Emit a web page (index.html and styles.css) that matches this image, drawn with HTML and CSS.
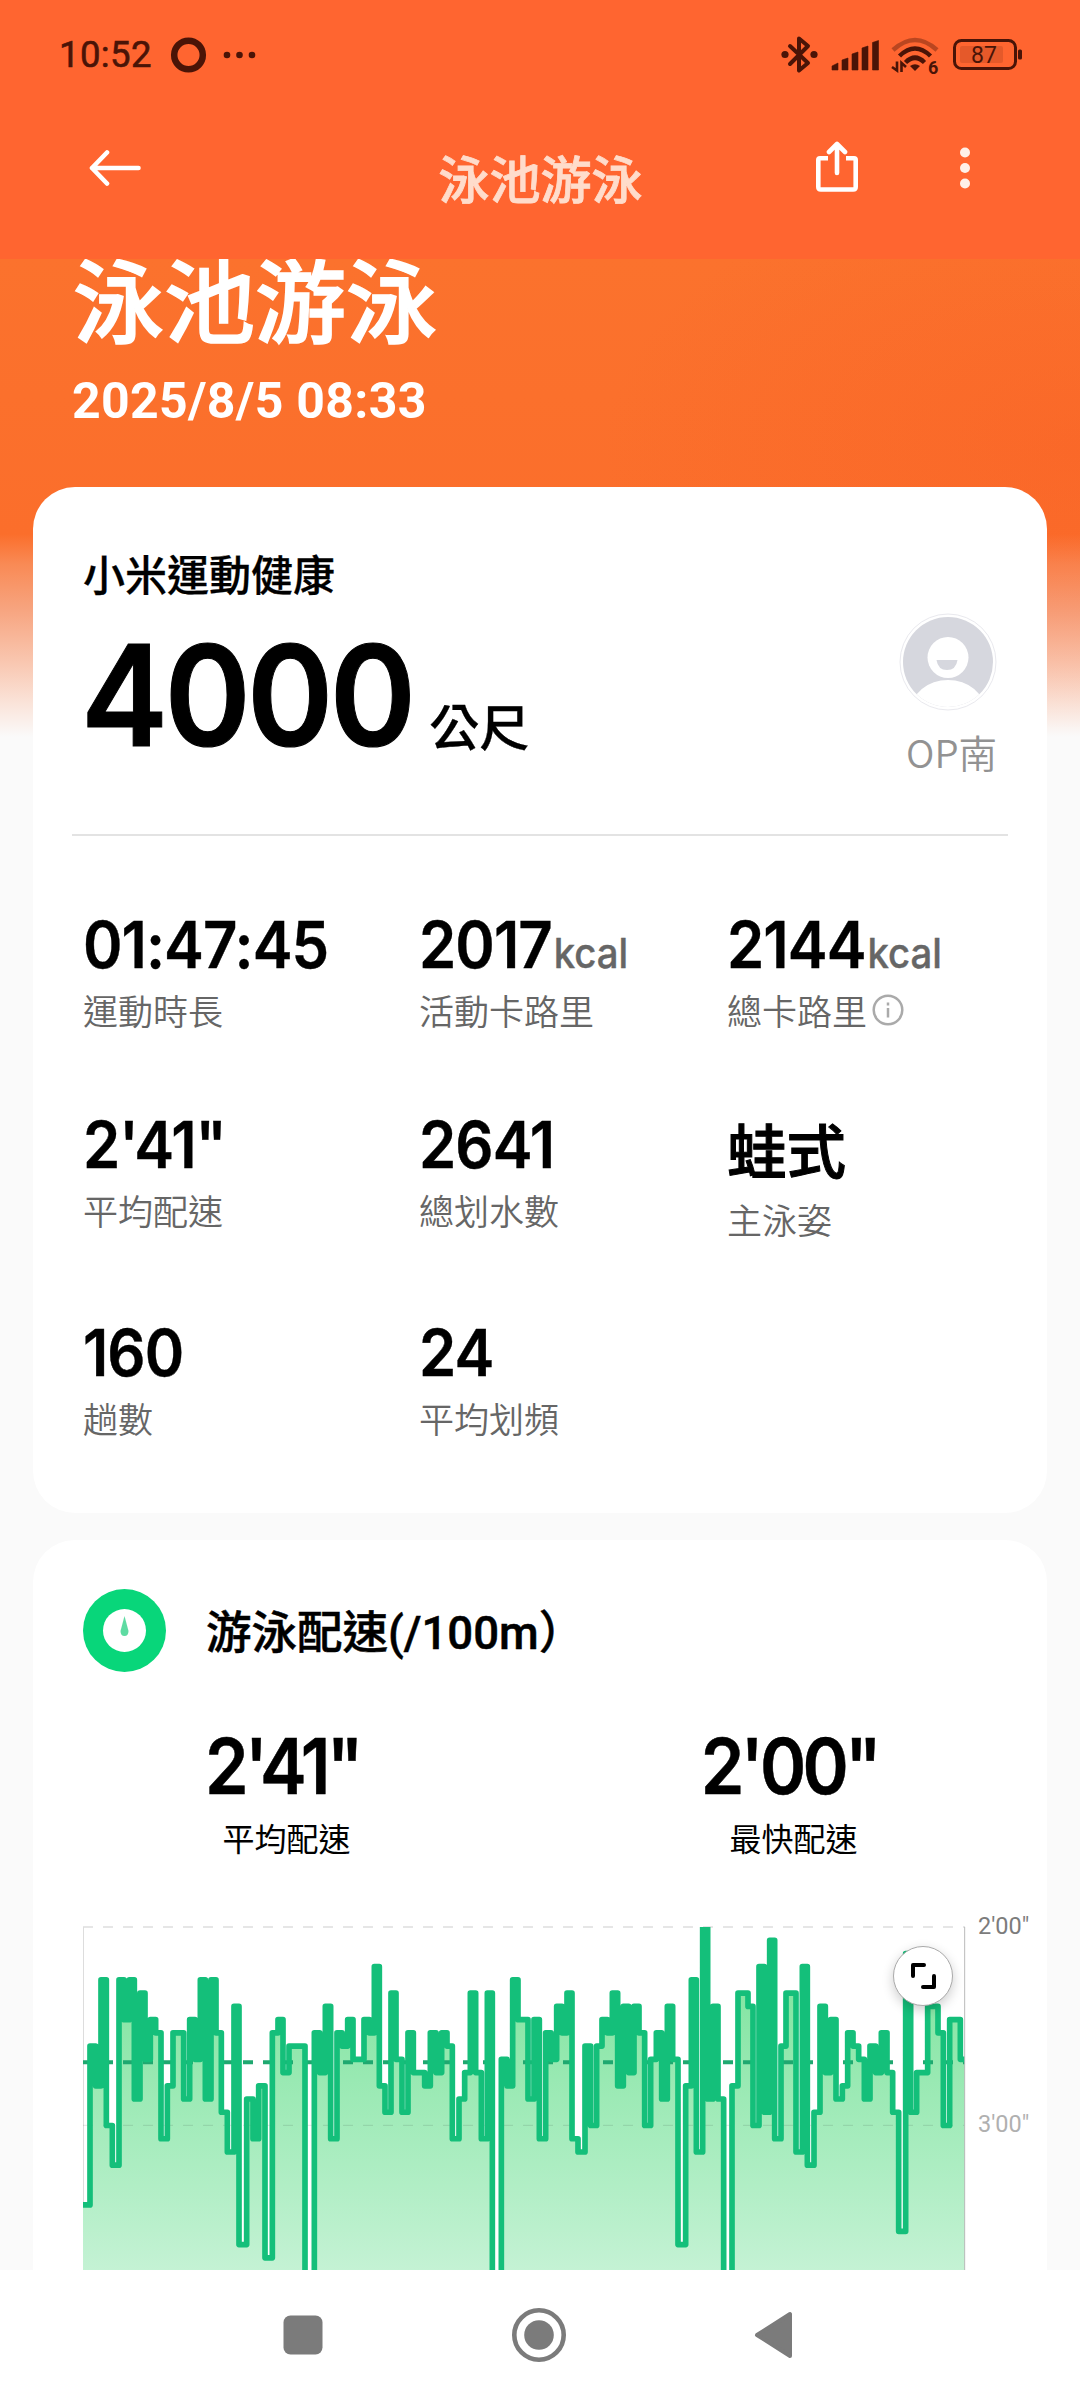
FILE: index.html
```html
<!DOCTYPE html>
<html lang="zh-Hant">
<head>
<meta charset="UTF-8">
<meta name="viewport" content="width=device-width, initial-scale=1.0">
<title>泳池游泳</title>
<link rel="stylesheet" href="styles.css">
</head>
<body>

  <header class="top">
    <div class="status">
      <span class="clock">10:52</span>
      <svg class="status-left" width="90" height="40" viewBox="0 0 90 40">
        <circle cx="21.5" cy="20" r="14.3" fill="none" stroke="#4a1407" stroke-width="6.5"/>
        <g fill="#4a1407"><circle cx="60" cy="20" r="3.3"/><circle cx="72.5" cy="20" r="3.3"/><circle cx="85" cy="20" r="3.3"/></g>
      </svg>
      <!-- bluetooth, signal, wifi, battery -->
      <svg class="status-right" width="244" height="48" viewBox="0 -2 244 48" fill="#4a1407">
        <path d="M10 13 L28 30 L19 37.5 V5.5 L28 13 L10 31" fill="none" stroke="#4a1407" stroke-width="4" stroke-linejoin="round" stroke-linecap="round"/>
        <circle cx="5" cy="21.5" r="3.6"/><circle cx="34" cy="21.5" r="3.6"/>
        <path d="M52 33 l6 -3 v7 h-6z M62 27 l6 -2 v12 h-6z M72 21 l6 -2 v18 h-6z M82 15 l6 -2 v24 h-6z M92.5 9.5 l6 -2 v29.5 h-6z" stroke="#4a1407" stroke-width=".6" stroke-linejoin="round"/>
        <g fill="none" stroke="#4a1407" stroke-width="4.5">
          <path d="M113 17 Q135 -3 157 17" opacity=".38"/>
          <path d="M119.5 23 Q135 8 150.5 23"/>
          <path d="M125.5 29.5 Q135 20 144.5 29.5"/>
        </g>
        <path d="M130 33 Q135 29.5 140 33 L135 38z"/>
        <path d="M112 34 l5 3.5 v-9 M121.5 39 v-9 l4.5 4" fill="none" stroke="#4a1407" stroke-width="2.6"/>
        <text x="148" y="41" class="wifi-num">6</text>
        <rect x="174.5" y="7.5" width="61" height="28" rx="7" fill="none" stroke="#4a1407" stroke-width="3"/>
        <rect x="180" y="13" width="43" height="17" rx="2" opacity=".14"/>
        <rect x="238" y="16.5" width="4" height="10" rx="1.5"/>
        <text x="191" y="30" class="battery-num">87</text>
      </svg>
    </div>
    <div class="appbar">
      <svg class="back" width="52" height="40" viewBox="0 0 52 40" fill="none" stroke="#fff" stroke-width="4.6" stroke-linecap="round" stroke-linejoin="round">
        <path d="M18 4.5 L3 20 L18 35.5 M3 20 H49.5"/>
      </svg>
      <span class="appbar-title">泳池游泳</span>
      <div class="actions">
        <svg width="44" height="54" viewBox="0 0 44 54" fill="none" stroke="#fff" stroke-width="4.6" stroke-linejoin="round">
          <path d="M13 17.3 H5 Q3.3 17.3 3.3 19 V46 Q3.3 48.5 5.8 48.5 H38.2 Q40.7 48.5 40.7 46 V19 Q40.7 17.3 39 17.3 H31"/>
          <path d="M22 32 V3 M14 11 L22 3 L30 11" stroke-linecap="round"/>
        </svg>
        <svg width="10" height="44" viewBox="0 0 10 44" fill="#fff0e8">
          <circle cx="5" cy="6.5" r="5"/><circle cx="5" cy="22" r="5"/><circle cx="5" cy="37.5" r="5"/>
        </svg>
      </div>
    </div>
  </header>

  <main>
    <h1>泳池游泳</h1>
    <p class="date">2025/8/5 08:33</p>

    <section class="card">
      <div class="summary">
        <div>
          <div class="source">小米運動健康</div>
          <div class="distance"><b>4000</b><span>公尺</span></div>
        </div>
        <div class="user">
          <svg width="98" height="98" viewBox="0 0 98 98">
            <clipPath id="face"><circle cx="49" cy="49" r="45"/></clipPath>
            <circle cx="49" cy="49" r="48" fill="#fff" stroke="#e9e9ee"/>
            <g clip-path="url(#face)">
              <rect width="98" height="98" fill="#d6d7de"/>
              <circle cx="49" cy="44.5" r="20.5" fill="#fff"/>
              <ellipse cx="49" cy="98" rx="37" ry="31" fill="#fff"/>
            </g>
            <path d="M37.5 47 H58.5 Q57 57 48 57 Q39 57 37.5 47z" fill="#d6d7de"/>
          </svg>
          <span>OP南</span>
        </div>
      </div>
      <div class="grid">
        <div><div class="value">01:47:45</div><div class="label">運動時長</div></div>
        <div><div class="value">2017<small>kcal</small></div><div class="label">活動卡路里</div></div>
        <div>
          <div class="value">2144<small>kcal</small></div>
          <div class="label">總卡路里<svg width="32" height="32" viewBox="0 0 32 32" fill="none" stroke="#aaa" stroke-width="2.5"><circle cx="16" cy="16" r="14.3"/><path d="M16 14 V23.5 M16 8.5 V11.5"/></svg></div>
        </div>
        <div><div class="value">2'41"</div><div class="label">平均配速</div></div>
        <div><div class="value">2641</div><div class="label">總划水數</div></div>
        <div><div class="value stroke">蛙式</div><div class="label">主泳姿</div></div>
        <div><div class="value">160</div><div class="label">趟數</div></div>
        <div><div class="value">24</div><div class="label">平均划頻</div></div>
      </div>
    </section>

    <section class="card pace">
      <div class="pace-head">
        <svg width="83" height="83" viewBox="0 0 83 83">
          <circle cx="41.5" cy="41.5" r="41.5" fill="#08d67a"/>
          <circle cx="41.5" cy="41.5" r="21.5" fill="#fff"/>
          <path d="M41.5 27 L45.5 42 Q45.5 47 41.5 47 Q37.5 47 37.5 42z" fill="#5edba2"/>
        </svg>
        <h2>游泳配速(/100m）</h2>
      </div>
      <div class="pace-stats">
        <div><b>2'41"</b><span>平均配速</span></div>
        <div><b>2'00"</b><span>最快配速</span></div>
      </div>
      <div class="chart">
        <div class="plot">
          <!-- 3 units = 1px -->
          <svg width="882" height="343" viewBox="0 0 2646 1029">
            <defs>
              <linearGradient id="fade" gradientUnits="userSpaceOnUse" x1="0" y1="0" x2="0" y2="1029">
                <stop offset="0" stop-color="#76e298"/>
                <stop offset="1" stop-color="#c4f2d4"/>
              </linearGradient>
              <clipPath id="plotArea"><rect width="2646" height="1029"/></clipPath>
            </defs>
            <path d="M0 0 H2646" stroke="#dedede" stroke-width="5" stroke-dasharray="30 30"/>
            <path d="M1.5 0 V1029" stroke="#ddd" stroke-width="3"/>
            <g clip-path="url(#plotArea)">
              <path id="area" fill="url(#fade)"/>
              <path d="M0 595 H2646" stroke="#000" stroke-opacity=".09" stroke-width="4" stroke-dasharray="30 30"/>
              <path d="M0 406 H2646" stroke="#1fa870" stroke-width="12" stroke-dasharray="30 30"/>
              <path id="line" fill="none" stroke="#14bf7a" stroke-width="17" stroke-linejoin="round"/>
            </g>
            <path d="M2645 0 V1029" stroke="#bbb" stroke-width="3"/>
          </svg>
          <button class="expand" aria-label="全螢幕">
            <svg width="30" height="30" viewBox="0 0 30 30" fill="none" stroke="#000" stroke-width="4" stroke-linecap="round" stroke-linejoin="round">
              <path d="M5 15 V4 H16 M15 26 H26 V15"/>
            </svg>
          </button>
        </div>
        <div class="axis"><span>2'00"</span><span class="faint">3'00"</span></div>
      </div>
    </section>
  </main>

  <nav>
    <svg width="40" height="60" viewBox="0 0 40 60" fill="#7b7b7b"><rect x=".5" y="10.5" width="39" height="39" rx="7"/></svg>
    <svg width="56" height="60" viewBox="0 0 56 60" fill="#7b7b7b"><circle cx="28" cy="30" r="24.7" fill="none" stroke="#7b7b7b" stroke-width="4.6"/><circle cx="28" cy="30" r="14.8"/></svg>
    <svg width="40" height="60" viewBox="0 0 40 60" fill="#7b7b7b" stroke="#7b7b7b" stroke-width="4" stroke-linejoin="round"><path d="M3 30 L36 9 V51z"/></svg>
  </nav>

  <script src="chart.js"></script>
</body>
</html>
```
FILE: styles.css
```css
* {
  box-sizing: border-box;
  margin: 0;
  padding: 0;
}

body {
  width: 1080px;
  height: 2400px;
  display: flex;
  flex-direction: column;
  overflow: hidden;
  background: #fafafa;
  color: #000;
  font-family: "Noto Sans CJK TC", sans-serif;
}

svg {
  display: block;
  flex: none;
}

/* top */
.top {
  height: 259px;
  flex: none;
  background: #ff6530;
}

.status {
  height: 110px;
  padding: 0 56px 0 59px;
  display: flex;
  align-items: center;
  color: #4a1407;
}

.clock {
  font: 400 36.5px/40px Roboto, sans-serif;
  -webkit-text-stroke: 0.6px #4a1407;
  letter-spacing: 0.4px;
  width: 93px;
}

.status-left {
  margin-left: 15px;
}

.status-right {
  margin-left: auto;
}

.wifi-num {
  font: 700 18px Roboto, sans-serif;
}

.battery-num {
  font: 400 23px Roboto, sans-serif;
}

.appbar {
  height: 116px;
  padding: 0 110px 0 89px;
  display: grid;
  grid-template-columns: 1fr auto 1fr;
  align-items: center;
}

.appbar-title {
  font-size: 51px;
  line-height: 60px;
  font-weight: 500;
  -webkit-text-stroke: 0.8px #ffdccb;
  color: #ffdccb;
  padding: 18px 0 0 22px;
}

.actions {
  display: flex;
  justify-content: flex-end;
  align-items: center;
  gap: 101px;
}

/* content */
main {
  flex: 1;
  overflow: hidden;
  background: radial-gradient(ellipse 480px 280px at 1080px 190px, rgba(248, 88, 34, .3), transparent) no-repeat,
    linear-gradient(#fb722d 0, #fb6e2b 275px, #f98a55 305px, #f7a47f 350px, #f9c8b2 405px, #fae4da 445px, #fafafa 478px);
}

h1 {
  margin: -13px 0 0 73px;
  font-size: 91px;
  line-height: 100px;
  font-weight: 500;
  -webkit-text-stroke: 1.5px #fff;
  color: #fff;
}

.date {
  margin: 25px 0 56px 72px;
  font: 700 50px/60px Roboto, sans-serif;
  letter-spacing: 0.3px;
  color: #fff;
}

.card {
  margin: 0 33px 27px;
  border-radius: 42px;
  background: #fff;
}

.summary {
  height: 349px;
  margin: 0 39px;
  padding: 61px 11px 0;
  border-bottom: 2px solid #e3e3e3;
  display: flex;
  justify-content: space-between;
}

.source {
  font-size: 42px;
  line-height: 50px;
  font-weight: 500;
  -webkit-text-stroke: 0.3px #000;
}

.distance {
  margin-top: 27px;
  line-height: 140px;
}

/* Inter is a bit wide for the numbers */
.distance b {
  display: inline-block;
  margin: 0 -6px 0 -2px;
  font: 600 140px/140px Inter, sans-serif;
  -webkit-text-stroke: 1px #000;
  letter-spacing: -4px;
  transform: scaleX(.935);
  transform-origin: left;
}

.distance span {
  font-size: 50px;
  font-weight: 500;
  line-height: 60px;
  -webkit-text-stroke: 0.3px #000;
}

.user {
  padding-top: 65px;
  display: flex;
  flex-direction: column;
  align-items: flex-end;
  font-size: 38.5px;
  line-height: 50px;
  font-weight: 350;
  color: #929292;
}

.user span {
  margin-top: 15px;
}

.grid {
  padding: 71px 0 74px 50px;
  display: grid;
  grid-template-columns: 336px 308px auto;
  row-gap: 75.5px;
}

.value {
  height: 76px;
  font: 600 64px/76px Inter, sans-serif;
  -webkit-text-stroke: 0.4px;
  letter-spacing: -1px;
  white-space: nowrap;
  transform: scaleX(.935);
  transform-origin: left;
}

.value small {
  margin-left: 2px;
  font-size: 41px;
  font-weight: 500;
  letter-spacing: 0;
  color: #666;
}

.value.stroke {
  height: 85px;
  font: 500 59.5px/83px "Noto Sans CJK TC", sans-serif;
  letter-spacing: 0;
  -webkit-text-stroke: 1px #000;
  transform: none;
}

.label {
  margin-top: 6px;
  display: flex;
  align-items: center;
  gap: 5px;
  font-size: 35px;
  line-height: 42px;
  font-weight: 350;
  color: #666;
}

/* pace */
.pace {
  height: 900px;
  padding-top: 49px;
}

.pace-head {
  margin-left: 50px;
  display: flex;
  align-items: center;
  gap: 40px;
}

h2 {
  font: 500 45.5px/60px Roboto, "Noto Sans CJK TC", sans-serif;
  -webkit-text-stroke: 0.5px #000;
  padding-top: 7px;
}

.pace-stats {
  margin-top: 49px;
  display: grid;
  grid-template-columns: 1fr 1fr;
  text-align: center;
}

.pace-stats b {
  display: block;
  font: 600 77px/90px Inter, sans-serif;
  -webkit-text-stroke: 0.5px #000;
  padding-right: 9px;
  letter-spacing: -4px;
  transform: scaleX(.91);
}

.pace-stats span {
  display: block;
  margin-top: 6px;
  font-size: 32px;
  line-height: 40px;
}

.chart {
  margin: 70px 0 0 50px;
  display: flex;
}

.plot {
  position: relative;
}

.plot > svg {
  overflow: visible;
}

.expand {
  position: absolute;
  top: 19px;
  right: 12px;
  width: 60px;
  height: 60px;
  border: 1px solid #aaa;
  border-radius: 50%;
  background: #fff;
  box-shadow: 0 4px 12px rgba(0, 0, 0, .2);
  display: grid;
  place-items: center;
}

.axis {
  margin: -15px 0 0 13px;
  display: flex;
  flex-direction: column;
  gap: 170px;
  font: 400 23.5px/28px Roboto, sans-serif;
  color: #7c7c7c;
}

.faint {
  color: #b0b0b0;
}

/* system nav */
nav {
  height: 130px;
  flex: none;
  padding: 0 286px 0 283px;
  display: flex;
  align-items: center;
  justify-content: space-between;
  background: #fff;
}
```
FILE: chart.js
```js
// [level, width]: one level is 4 seconds below 2'00"
const laps = [
  [21,21],[9,17],[12,16],[4,16],[15,18],[18,20],[4,15],[7,16],[4,15],[13,17],[5,15],[10,16],
  [7,16],[8,16],[16,19],[12,17],[8,32],[13,18],[7,16],[10,16],[4,15],[13,17],[4,15],[8,16],
  [14,18],[17,20],[6,15],[24,23],[13,19],[16,17],[12,19],[25,22],[8,17],[7,15],[11,18],[9,48],
  [30,28],[8,16],[11,17],[6,16],[16,19],[8,15],[9,17],[7,16],[10,33],[7,16],[8,15],[3,15],
  [12,17],[14,18],[5,15],[10,18],[14,18],[8,16],[11,34],[12,17],[8,17],[11,17],[8,16],[9,16],
  [16,20],[13,17],[11,17],[5,16],[11,17],[16,18],[5,15],[30,27],[10,17],[12,17],[4,16],[7,30],
  [13,18],[7,16],[16,19],[8,16],[10,17],[6,16],[8,15],[5,15],[16,18],[17,21],[9,17],[15,18],
  [9,16],[7,16],[8,15],[5,16],[12,17],[6,16],[11,16],[6,15],[8,17],[15,18],[10,17],[8,16],
  [13,17],[6,16],[10,16],[24,23],[12,17],[4,15],[17,19],[0,15],[13,16],[6,15],[13,17],[30,25],
  [12,18],[5,30],[6,15],[15,18],[3,16],[14,16],[1,15],[16,19],[9,15],[5,30],[17,19],[3,15],
  [18,20],[14,18],[6,16],[11,16],[7,16],[13,19],[12,16],[8,16],[9,17],[10,17],[13,17],[9,17],
  [11,17],[8,17],[11,17],[14,18],[23,21],[2,15],[14,18],[11,33],[6,31],[8,16],[15,19],[7,32],
  [10,14]
];
const step = 39.7;

let x = 0;
let d = '';
laps.forEach(([level, width], i) => {
  const y = (level * step).toFixed(1);
  d += i === 0 ? `M0 ${y}` : `V${y}`;
  x += width;
  d += `H${x}`;
});

document.getElementById('line').setAttribute('d', d);
document.getElementById('area').setAttribute('d', d + 'V1200H0Z');
```
